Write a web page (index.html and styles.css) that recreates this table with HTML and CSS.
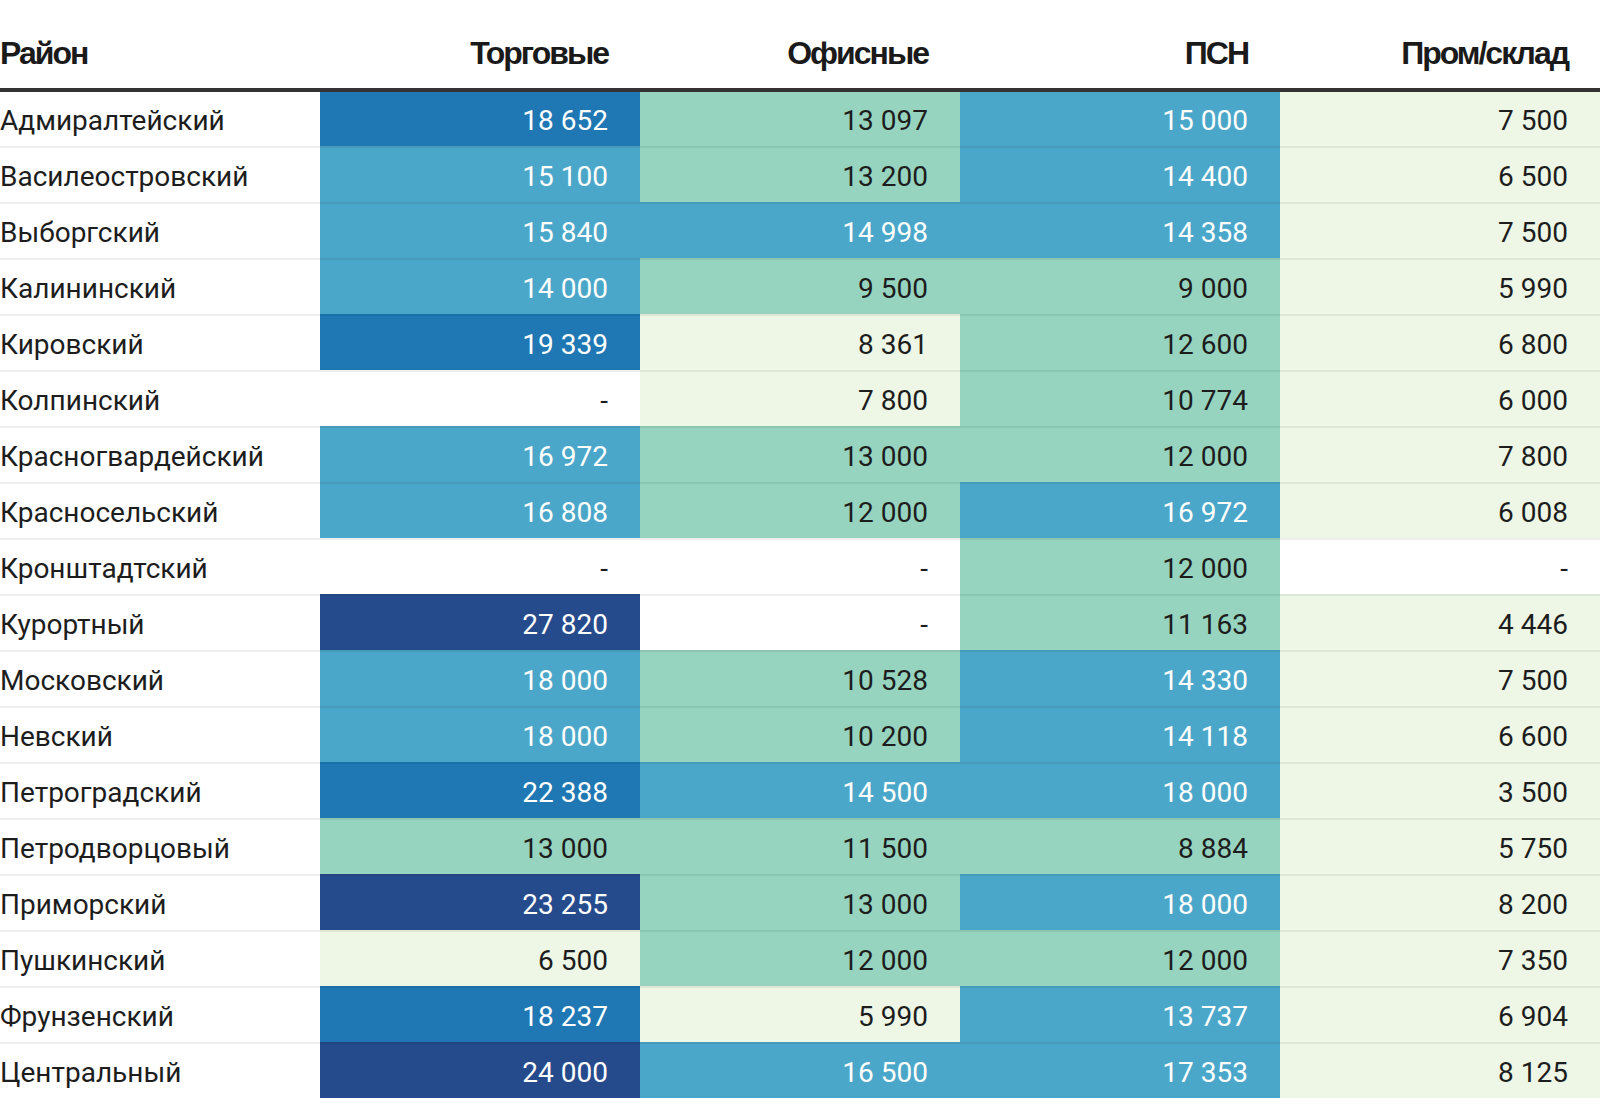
FILE: index.html
```html
<!DOCTYPE html>
<html lang="ru">
<head>
<meta charset="utf-8">
<title>Ставки аренды по районам</title>
<link rel="stylesheet" href="styles.css">
</head>
<body>
<table class="rates">
  <colgroup><col><col><col><col><col></colgroup>
  <thead>
    <tr>
      <th class="name">Район</th>
      <th>Торговые</th>
      <th>Офисные</th>
      <th>ПСН</th>
      <th>Пром/склад</th>
    </tr>
  </thead>
  <tbody>
    <tr><td class="name">Адмиралтейский</td><td class="c3">18 652</td><td class="cm">13 097</td><td class="c2">15 000</td><td class="cp">7 500</td></tr>
    <tr><td class="name">Василеостровский</td><td class="c2">15 100</td><td class="cm">13 200</td><td class="c2">14 400</td><td class="cp">6 500</td></tr>
    <tr><td class="name">Выборгский</td><td class="c2">15 840</td><td class="c2">14 998</td><td class="c2">14 358</td><td class="cp">7 500</td></tr>
    <tr><td class="name">Калининский</td><td class="c2">14 000</td><td class="cm">9 500</td><td class="cm">9 000</td><td class="cp">5 990</td></tr>
    <tr><td class="name">Кировский</td><td class="c3">19 339</td><td class="cp">8 361</td><td class="cm">12 600</td><td class="cp">6 800</td></tr>
    <tr><td class="name">Колпинский</td><td class="cw">-</td><td class="cp">7 800</td><td class="cm">10 774</td><td class="cp">6 000</td></tr>
    <tr><td class="name">Красногвардейский</td><td class="c2">16 972</td><td class="cm">13 000</td><td class="cm">12 000</td><td class="cp">7 800</td></tr>
    <tr><td class="name">Красносельский</td><td class="c2">16 808</td><td class="cm">12 000</td><td class="c2">16 972</td><td class="cp">6 008</td></tr>
    <tr><td class="name">Кронштадтский</td><td class="cw">-</td><td class="cw">-</td><td class="cm">12 000</td><td class="cw">-</td></tr>
    <tr><td class="name">Курортный</td><td class="c4">27 820</td><td class="cw">-</td><td class="cm">11 163</td><td class="cp">4 446</td></tr>
    <tr><td class="name">Московский</td><td class="c2">18 000</td><td class="cm">10 528</td><td class="c2">14 330</td><td class="cp">7 500</td></tr>
    <tr><td class="name">Невский</td><td class="c2">18 000</td><td class="cm">10 200</td><td class="c2">14 118</td><td class="cp">6 600</td></tr>
    <tr><td class="name">Петроградский</td><td class="c3">22 388</td><td class="c2">14 500</td><td class="c2">18 000</td><td class="cp">3 500</td></tr>
    <tr><td class="name">Петродворцовый</td><td class="cm">13 000</td><td class="cm">11 500</td><td class="cm">8 884</td><td class="cp">5 750</td></tr>
    <tr><td class="name">Приморский</td><td class="c4">23 255</td><td class="cm">13 000</td><td class="c2">18 000</td><td class="cp">8 200</td></tr>
    <tr><td class="name">Пушкинский</td><td class="cp">6 500</td><td class="cm">12 000</td><td class="cm">12 000</td><td class="cp">7 350</td></tr>
    <tr><td class="name">Фрунзенский</td><td class="c3">18 237</td><td class="cp">5 990</td><td class="c2">13 737</td><td class="cp">6 904</td></tr>
    <tr><td class="name">Центральный</td><td class="c4">24 000</td><td class="c2">16 500</td><td class="c2">17 353</td><td class="cp">8 125</td></tr>
  </tbody>
</table>
</body>
</html>
```
FILE: styles.css
```css
html, body {
  margin: 0;
  padding: 0;
  background: #ffffff;
}

.rates {
  width: 1600px;
  table-layout: fixed;
  border-collapse: separate;
  border-spacing: 0;
  font-family: Roboto, "Noto Sans", sans-serif;
  color: #1d1d1d;
}

.rates col {
  width: 320px;
}

.rates th {
  height: 92px;
  box-sizing: border-box;
  padding: 0 32px 17px 0;
  vertical-align: bottom;
  text-align: right;
  font-family: "Liberation Sans", Arial, sans-serif;
  font-weight: bold;
  font-size: 32px;
  line-height: 36px;
  letter-spacing: -2px;
  color: #1a1a1a;
  border-bottom: 4px solid #333333;
}

.rates th.name {
  text-align: left;
}

.rates td {
  height: 51px;
  box-sizing: content-box;
  padding: 3px 32px 0 0;
  vertical-align: top;
  text-align: right;
  font-size: 28px;
  line-height: 51px;
  white-space: nowrap;
  font-weight: 400;
}

.rates tbody tr + tr td {
  border-top: 2px solid rgba(0, 0, 0, 0.065);
}

.rates td.name {
  text-align: left;
  padding-left: 0;
  color: #1d1d1d;
}

.cw { background: #ffffff; color: #1d1d1d; }
.cp { background: #eef7e6; color: #1d1d1d; }
.cm { background: #97d4bf; color: #1d1d1d; }
.c2 { background: #4ba7c9; color: #ffffff; }
.c3 { background: #1f78b4; color: #ffffff; }
.c4 { background: #264b8c; color: #ffffff; }
```
